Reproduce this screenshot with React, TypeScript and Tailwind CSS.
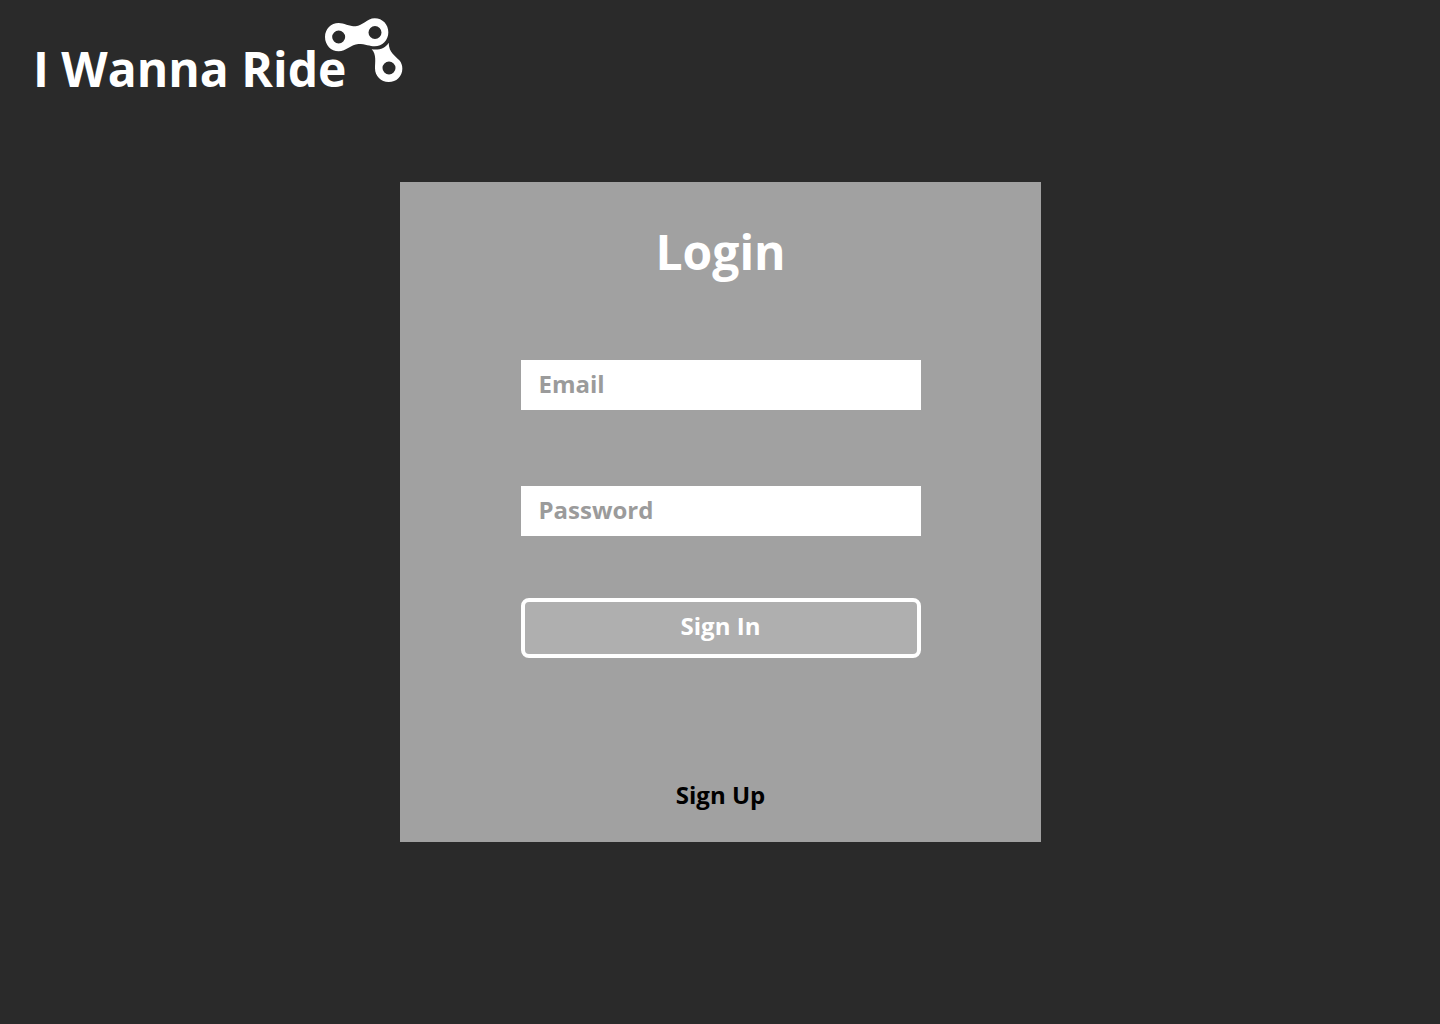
function ChainLogo() {
  return (
    <svg
      aria-hidden="true"
      viewBox="27 21 240 198"
      className="-ml-[22px] mt-[17px] h-[66px] w-20 shrink-0"
      fill="white"
      fillRule="evenodd"
    >
      <path d="M71 39C87 39 101 49 122 49C143 48 156 25 179 25C203 25 220 44 220 67C220 91 202 109 179 109C165 109 151 102 130 102C109 103 93 124 71 124C48 124 30 105 30 81C30 57 48 39 71 39ZM71 61.500A19.500 19.500 0 1 0 71 100.500A19.500 19.500 0 1 0 71 61.500ZM180 48A19.500 19.500 0 1 0 180 87A19.500 19.500 0 1 0 180 48Z" />
      <path d="M170 118C193 121 211 115 221 98C222 129 240 136 253 151C259 158 262 167 262 176C262 199 244 216 221 216C198 216 180 199 180 175C180 158 185 133 170 118ZM222 154.500A19.500 19.500 0 1 0 222 193.500A19.500 19.500 0 1 0 222 154.500Z" />
    </svg>
  );
}

function Field({ id, label, type }: { id: string; label: string; type: string }) {
  return (
    <div>
      <label htmlFor={id} className="sr-only">
        {label}
      </label>
      <input
        id={id}
        name={id}
        type={type}
        placeholder={label}
        className="block h-[50px] w-full bg-white px-[18px] pb-1 text-2xl leading-9 font-bold text-[#2a2a2a] placeholder:text-[#9b9b9b]"
      />
    </div>
  );
}

export default function App() {
  return (
    <div className="min-h-screen bg-[#2a2a2a] pb-12 font-['Open_Sans',sans-serif] font-bold text-white">
      <header className="flex h-[182px] items-start pl-[33px]">
        <h1 className="pt-9 text-5xl leading-[66px] whitespace-nowrap">I Wanna Ride</h1>
        <ChainLogo />
      </header>
      <main className="mx-auto flex w-full max-w-[641px] flex-col items-center bg-[#a1a1a1] pt-[37px] pr-6 pb-[31px] pl-[25px]">
        <h2 className="text-5xl leading-[66px]">Login</h2>
        <form
          className="mt-[75px] flex w-full max-w-[400px] flex-col"
          onSubmit={(event) => event.preventDefault()}
        >
          <div className="flex flex-col gap-[76px]">
            <Field id="email" label="Email" type="email" />
            <Field id="password" label="Password" type="password" />
          </div>
          <button
            type="submit"
            className="mt-[62px] h-[60px] rounded-lg border-4 border-white bg-[#afafaf] pb-1 text-2xl"
          >
            Sign In
          </button>
        </form>
        <a href="#sign-up" className="mt-[121px] text-2xl text-black">
          Sign Up
        </a>
      </main>
    </div>
  );
}
